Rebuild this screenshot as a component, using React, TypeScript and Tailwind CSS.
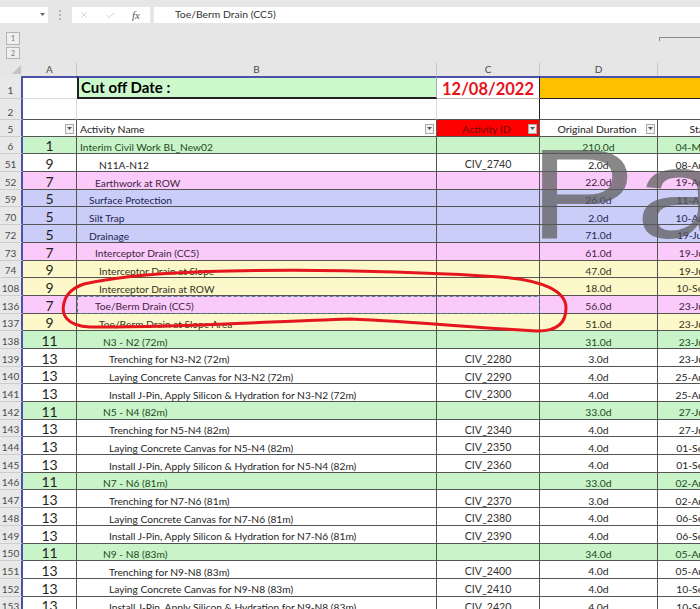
import { Check, X } from 'lucide-react'

type Tone = 'green' | 'pink' | 'blue' | 'yellow' | 'white'

type Row = {
  n: number
  lvl: number
  name: string
  id: string
  dur: string
  start: string
  tone: Tone
}

const rows: Row[] = [
  { n: 6, lvl: 1, name: 'Interim Civil Work BL_New02', id: '', dur: '210.0d', start: '04-Mar-22', tone: 'green' },
  { n: 51, lvl: 9, name: 'N11A-N12', id: 'CIV_2740', dur: '2.0d', start: '08-Aug-22', tone: 'white' },
  { n: 52, lvl: 7, name: 'Earthwork at ROW', id: '', dur: '22.0d', start: '19-Aug-22', tone: 'pink' },
  { n: 59, lvl: 5, name: 'Surface Protection', id: '', dur: '26.0d', start: '11-Apr-22', tone: 'blue' },
  { n: 70, lvl: 5, name: 'Silt Trap', id: '', dur: '2.0d', start: '10-Aug-22', tone: 'blue' },
  { n: 72, lvl: 5, name: 'Drainage', id: '', dur: '71.0d', start: '19-Jun-22', tone: 'blue' },
  { n: 73, lvl: 7, name: 'Interceptor Drain (CC5)', id: '', dur: '61.0d', start: '19-Jul-22', tone: 'pink' },
  { n: 74, lvl: 9, name: 'Interceptor Drain at Slope', id: '', dur: '47.0d', start: '19-Jul-22', tone: 'yellow' },
  { n: 108, lvl: 9, name: 'Interceptor Drain at ROW', id: '', dur: '18.0d', start: '10-Sep-22', tone: 'yellow' },
  { n: 136, lvl: 7, name: 'Toe/Berm Drain (CC5)', id: '', dur: '56.0d', start: '23-Jul-22', tone: 'pink' },
  { n: 137, lvl: 9, name: 'Toe/Berm Drain at Slope Area', id: '', dur: '51.0d', start: '23-Jul-22', tone: 'yellow' },
  { n: 138, lvl: 11, name: 'N3 - N2 (72m)', id: '', dur: '31.0d', start: '23-Jul-22', tone: 'green' },
  { n: 139, lvl: 13, name: 'Trenching for N3-N2 (72m)', id: 'CIV_2280', dur: '3.0d', start: '23-Jul-22', tone: 'white' },
  { n: 140, lvl: 13, name: 'Laying Concrete Canvas for N3-N2 (72m)', id: 'CIV_2290', dur: '4.0d', start: '25-Aug-22', tone: 'white' },
  { n: 141, lvl: 13, name: 'Install J-Pin, Apply Silicon & Hydration for N3-N2 (72m)', id: 'CIV_2300', dur: '4.0d', start: '25-Aug-22', tone: 'white' },
  { n: 142, lvl: 11, name: 'N5 - N4 (82m)', id: '', dur: '33.0d', start: '27-Jul-22', tone: 'green' },
  { n: 143, lvl: 13, name: 'Trenching for N5-N4 (82m)', id: 'CIV_2340', dur: '4.0d', start: '27-Jul-22', tone: 'white' },
  { n: 144, lvl: 13, name: 'Laying Concrete Canvas for N5-N4 (82m)', id: 'CIV_2350', dur: '4.0d', start: '01-Sep-22', tone: 'white' },
  { n: 145, lvl: 13, name: 'Install J-Pin, Apply Silicon & Hydration for N5-N4 (82m)', id: 'CIV_2360', dur: '4.0d', start: '01-Sep-22', tone: 'white' },
  { n: 146, lvl: 11, name: 'N7 - N6 (81m)', id: '', dur: '33.0d', start: '02-Aug-22', tone: 'green' },
  { n: 147, lvl: 13, name: 'Trenching for N7-N6 (81m)', id: 'CIV_2370', dur: '3.0d', start: '02-Aug-22', tone: 'white' },
  { n: 148, lvl: 13, name: 'Laying Concrete Canvas for N7-N6 (81m)', id: 'CIV_2380', dur: '4.0d', start: '06-Sep-22', tone: 'white' },
  { n: 149, lvl: 13, name: 'Install J-Pin, Apply Silicon & Hydration for N7-N6 (81m)', id: 'CIV_2390', dur: '4.0d', start: '06-Sep-22', tone: 'white' },
  { n: 150, lvl: 11, name: 'N9 - N8 (83m)', id: '', dur: '34.0d', start: '05-Aug-22', tone: 'green' },
  { n: 151, lvl: 13, name: 'Trenching for N9-N8 (83m)', id: 'CIV_2400', dur: '4.0d', start: '05-Aug-22', tone: 'white' },
  { n: 152, lvl: 13, name: 'Laying Concrete Canvas for N9-N8 (83m)', id: 'CIV_2410', dur: '4.0d', start: '10-Sep-22', tone: 'white' },
  { n: 153, lvl: 13, name: 'Install J-Pin, Apply Silicon & Hydration for N9-N8 (83m)', id: 'CIV_2420', dur: '4.0d', start: '10-Sep-22', tone: 'white' },
]

const toneBg: Record<Tone, string> = {
  green: 'bg-[#c9f4c9]',
  pink: 'bg-[#facbfa]',
  blue: 'bg-[#cacdf7]',
  yellow: 'bg-[#fcf8ca]',
  white: 'bg-white',
}

const toneText: Record<Tone, string> = {
  green: 'text-[#1c4a1c]',
  pink: 'text-[#3e2340]',
  blue: 'text-[#1f2653]',
  yellow: 'text-[#35331d]',
  white: 'text-[#262626]',
}

const indent: Record<number, string> = {
  1: 'pl-[3px]',
  5: 'pl-[12px]',
  7: 'pl-[18px]',
  9: 'pl-[22px]',
  11: 'pl-[26px]',
  13: 'pl-[32px]',
}

function FilterButton() {
  return (
    <span className="w-[9px] h-[10px] mb-[2px] border border-[#a8a8a8] bg-[#f3f3f3] flex items-center justify-center shrink-0">
      <svg width="5" height="3" viewBox="0 0 5 3">
        <path d="M0 0h5L2.5 3z" fill="#555" />
      </svg>
    </span>
  )
}

function RowHead({ n }: { n: number }) {
  return (
    <div className="w-[23px] shrink-0 h-full bg-[#e8e8e8] border-b border-[#cdcdcd] border-r-2 border-r-[#4b50a8] flex items-end justify-center pb-[2px] leading-none text-[10px] text-[#4a4a4a]">
      {n}
    </div>
  )
}

function DataRow({ row }: { row: Row }) {
  const bg = toneBg[row.tone]
  const fg = toneText[row.tone]
  return (
    <div className="flex h-[17.7px] leading-none">
      <RowHead n={row.n} />
      <div className={`w-[54px] shrink-0 border-b border-r border-[#555] flex items-end justify-center text-[14px] text-[#1f1f1f] ${bg}`}>
        {row.lvl}
      </div>
      <div className={`w-[360px] shrink-0 border-b border-r border-[#555] flex items-end pb-[1px] whitespace-nowrap overflow-hidden text-[10.2px] ${indent[row.lvl]} ${bg} ${fg}`}>
        {row.name}
      </div>
      <div className={`w-[103px] shrink-0 border-b border-r border-[#555] flex items-end pb-[1px] justify-center text-[10.6px] text-[#333] ${bg}`}>
        {row.id}
      </div>
      <div className={`w-[118px] shrink-0 border-b border-r border-[#555] flex items-end pb-[1px] justify-center text-[10.4px] ${bg} ${fg}`}>
        {row.dur}
      </div>
      <div className={`w-[86px] shrink-0 border-b border-r border-[#555] flex items-end pb-[1px] justify-center text-[10.4px] ${bg} ${fg}`}>
        {row.start}
      </div>
    </div>
  )
}

export default function App() {
  return (
    <div className="relative w-[700px] h-[609px] overflow-hidden bg-white font-[Lato]">
      {/* formula bar */}
      <div className="h-[23px] bg-[#e6e6e6] flex items-end">
        <div className="w-[48px] h-[16px] bg-white relative">
          <svg className="absolute left-[40px] top-[6px]" width="5" height="3" viewBox="0 0 5 3">
            <path d="M0 0h5L2.5 3z" fill="#666" />
          </svg>
        </div>
        <div className="w-[24px] h-[16px] flex flex-col items-center justify-center gap-[2px]">
          <span className="w-[2px] h-[2px] bg-[#b5b5b5]" />
          <span className="w-[2px] h-[2px] bg-[#b5b5b5]" />
          <span className="w-[2px] h-[2px] bg-[#b5b5b5]" />
        </div>
        <div className="w-[78px] h-[16px] bg-white flex items-center pl-[7px] gap-[16px]">
          <X size={10} strokeWidth={1.2} color="#a9a9a9" />
          <Check size={11} strokeWidth={1.2} color="#a9a9a9" />
          <span className="font-['Liberation_Serif'] italic text-[11px] text-[#555] leading-none">fx</span>
        </div>
        <div className="w-[4px]" />
        <div className="flex-1 h-[16px] bg-white flex items-center pl-[21px] text-[10.4px] text-[#333]">
          Toe/Berm Drain (CC5)
        </div>
      </div>

      {/* outline area */}
      <div className="h-[40px] bg-[#e6e6e6] relative">
        <div className="absolute left-[6px] top-[9px] flex flex-col gap-[2px]">
          <div className="w-[14px] h-[13px] border border-[#b4b4b4] bg-[#efefef] flex items-center justify-center text-[7px] text-[#777]">1</div>
          <div className="w-[14px] h-[12px] border border-[#b4b4b4] bg-[#efefef] flex items-center justify-center text-[7px] text-[#777]">2</div>
        </div>
        <div className="absolute left-[659px] top-[14px] w-[41px] h-[4px] border-t border-l border-[#8a8a8a]" />
      </div>

      {/* column headers */}
      <div className="h-[13px] bg-[#e6e6e6] flex text-[10px] text-[#4a4a4a]">
        <div className="w-[23px] shrink-0 relative">
          <svg className="absolute left-[12px] top-[2px]" width="9" height="9" viewBox="0 0 9 9">
            <path d="M9 0V9H0z" fill="#c2c2c2" />
          </svg>
        </div>
        <div className="w-[54px] shrink-0 border-r border-[#c6c6c6] flex items-center justify-center">A</div>
        <div className="w-[360px] shrink-0 border-r border-[#c6c6c6] flex items-center justify-center">B</div>
        <div className="w-[103px] shrink-0 border-r border-[#c6c6c6] flex items-center justify-center">C</div>
        <div className="w-[118px] shrink-0 border-r border-[#c6c6c6] flex items-center justify-center">D</div>
        <div className="w-[86px] shrink-0" />
      </div>

      {/* row 1 */}
      <div className="flex h-[23px] leading-none">
        <div className="w-[23px] shrink-0 bg-[#e8e8e8] border-b border-[#cdcdcd] border-r-2 border-r-[#4b50a8] flex items-end pb-[3px] justify-center text-[10px] text-[#4a4a4a]">1</div>
        <div className="w-[54px] shrink-0 bg-white border-t-2 border-t-[#4b50a8] border-b border-b-[#dadada]" />
        <div className="w-[360px] shrink-0 bg-[#ccf9cc] border-t-2 border-t-[#4b50a8] border-l-2 border-l-[#222] border-b-2 border-b-[#222] border-r border-r-[#aaa] flex items-end pb-[2px] pl-[2px] text-[15px] font-bold text-black">
          Cut off Date :
        </div>
        <div className="w-[103px] shrink-0 bg-white border-t-2 border-t-[#4b50a8] border-b border-b-[#bbb] border-r border-r-[#222] flex items-end pb-[1px] justify-center text-[16.5px] font-bold text-[#e8121b]">
          12/08/2022
        </div>
        <div className="flex-1 bg-[#ffc000] border-t-2 border-t-[#4b50a8] border-b border-b-[#222]" />
      </div>

      {/* row 2 */}
      <div className="flex h-[21px]">
        <div className="w-[23px] shrink-0 bg-[#e8e8e8] border-b border-[#cdcdcd] border-r-2 border-r-[#4b50a8] flex items-end pb-[2px] leading-none justify-center text-[10px] text-[#4a4a4a]">2</div>
        <div className="w-[54px] shrink-0 bg-white border-b border-r border-b-[#555] border-r-[#dadada]" />
        <div className="w-[360px] shrink-0 bg-white border-b border-r border-b-[#555] border-r-[#dadada]" />
        <div className="w-[103px] shrink-0 bg-white border-b border-r border-b-[#555] border-r-[#222]" />
        <div className="flex-1 bg-white border-b border-b-[#555]" />
      </div>

      {/* row 5: table headers */}
      <div className="flex h-[16.7px] leading-none text-[10.4px] text-[#222]">
        <RowHead n={5} />
        <div className="w-[54px] shrink-0 bg-white border-b border-r border-[#555] flex items-end justify-end pr-[2px]">
          <FilterButton />
        </div>
        <div className="w-[360px] shrink-0 bg-white border-b border-r border-[#555] flex items-end justify-between pl-[3px] pr-[2px]">
          <span className="pb-[1px]">Activity Name</span>
          <FilterButton />
        </div>
        <div className="w-[103px] shrink-0 bg-[#fe0000] border-b border-r border-[#555] flex items-end pr-[2px]">
          <span className="flex-1 text-center text-[#6e0a0a] pl-[8px] pb-[1px]">Activity ID</span>
          <FilterButton />
        </div>
        <div className="w-[118px] shrink-0 bg-white border-b border-r border-[#555] flex items-end pr-[2px]">
          <span className="flex-1 text-center pl-[8px] pb-[1px]">Original Duration</span>
          <FilterButton />
        </div>
        <div className="w-[86px] shrink-0 bg-white border-b border-r border-[#555] flex items-end pb-[1px] justify-center">
          Start
        </div>
      </div>

      {rows.map(r => (
        <DataRow key={r.n} row={r} />
      ))}

      {/* page break preview watermark */}
      <div className="absolute left-[529px] top-[130px] origin-left scale-x-[1.25] font-['Liberation_Sans'] text-[128px] leading-none text-[rgba(90,90,90,0.72)] pointer-events-none whitespace-nowrap">
        Page 1
      </div>

      {/* marks drawn over the sheet */}
      <svg className="absolute left-0 top-0 pointer-events-none" width="700" height="609" viewBox="0 0 700 609">
        <rect x="77.5" y="296.5" width="462" height="17" fill="none" stroke="#5c7f8e" strokeWidth="1" strokeDasharray="4 2" />
        <path
          d="M84 284 C120 276 170 272 230 271 C320 269 420 272 500 277 C545 280 566 292 566 308 C566 324 556 331 538 331 C480 328 420 322 350 319 C260 322 160 328 90 327 C66 326 61 314 64 303 C66 294 72 288 84 284"
          fill="none"
          stroke="#e5161d"
          strokeWidth="3"
          strokeLinecap="round"
          strokeLinejoin="round"
        />
      </svg>
    </div>
  )
}
